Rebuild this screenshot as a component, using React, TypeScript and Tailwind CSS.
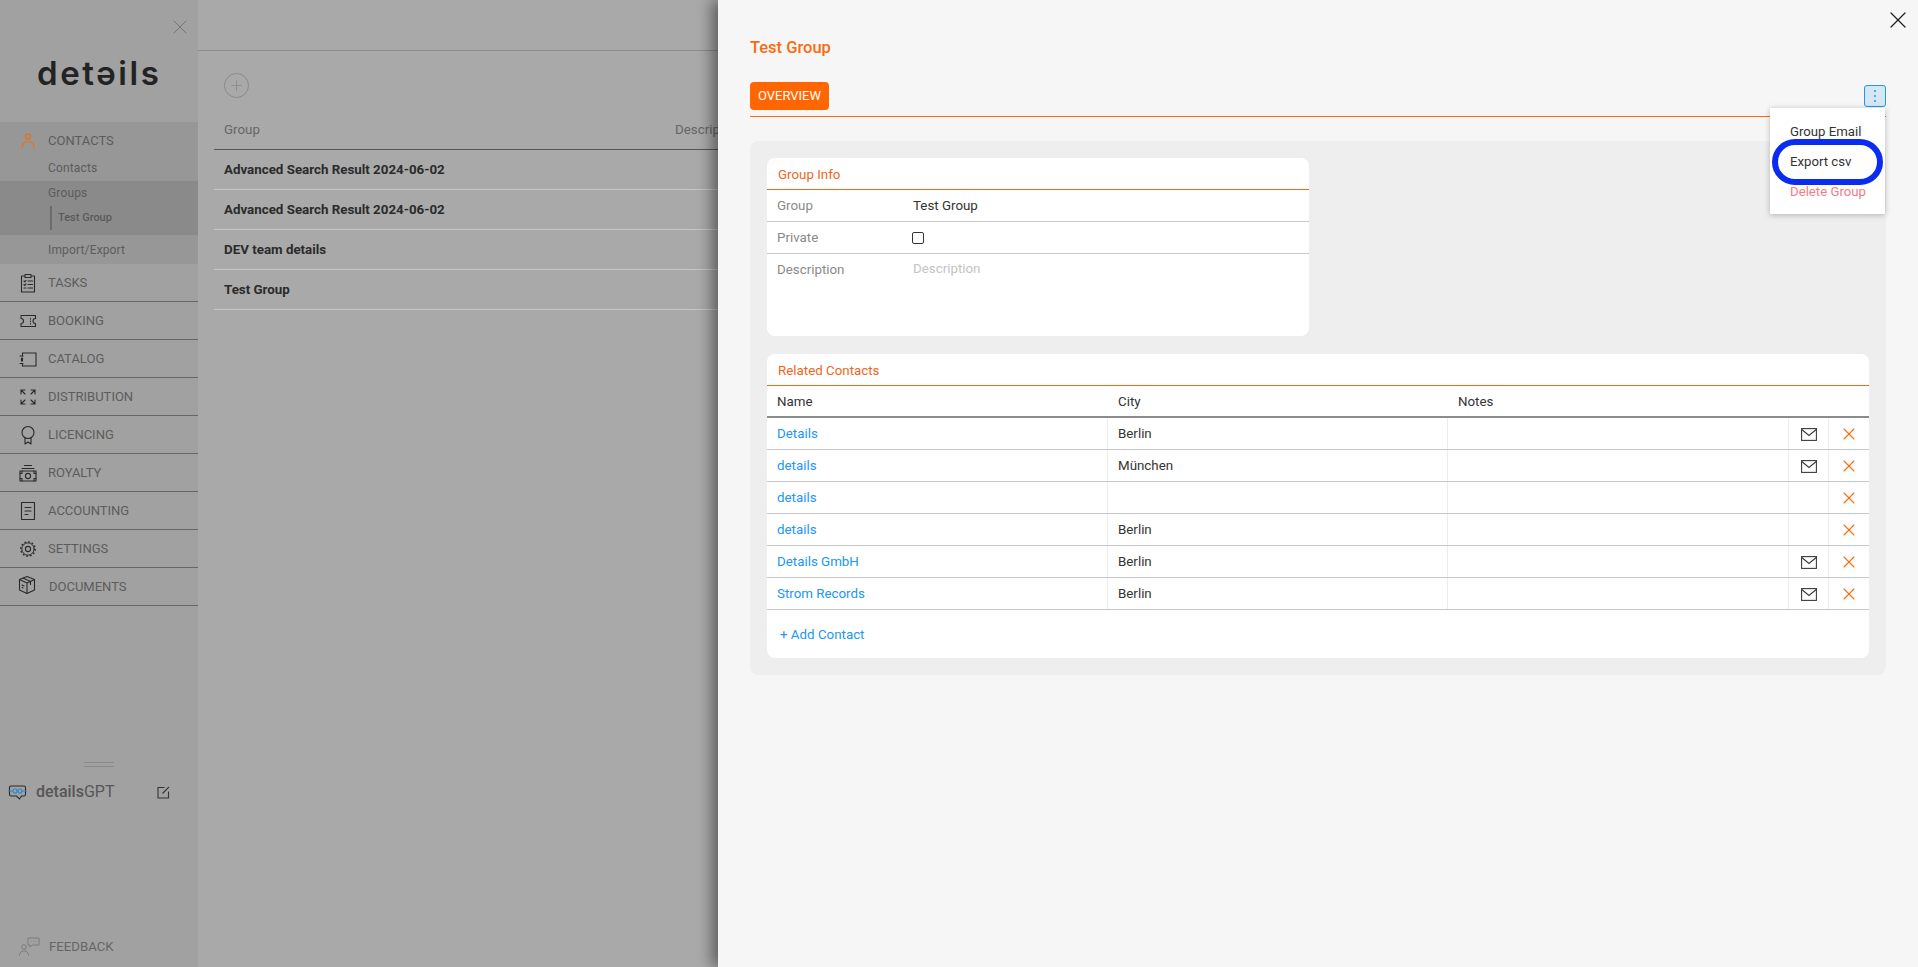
import { X, Plus } from 'lucide-react';
import type { ReactNode } from 'react';

const stroke = {
  fill: 'none',
  stroke: 'currentColor',
  strokeWidth: 1.1,
  strokeLinecap: 'round',
  strokeLinejoin: 'round',
} as const;

function Icon({ children, box = 20, className = '' }: { children: ReactNode; box?: number; className?: string }) {
  return (
    <svg width={box} height={box} viewBox="0 0 20 20" {...stroke} className={className}>
      {children}
    </svg>
  );
}

const TasksIcon = () => (
  <Icon>
    <path d="M6.5 3H3.5v16h13V3h-3" />
    <path d="M7 4.5V1.5h6v3z" />
    <path d="M6 8l.8.8L8 7.4M6 11.5l.8.8L8 10.9M6 15h2M10 8h4.5M10 11.5h4.5M10 15h4.5" />
  </Icon>
);
const BookingIcon = () => (
  <Icon>
    <path d="M3 4.5h14.5v3a2.5 2.5 0 0 0 0 5v3H3v-3a2.5 2.5 0 0 0 0-5z" />
    <path d="M12.5 7.5v.6M12.5 10v.6M12.5 12.5v.6" />
  </Icon>
);
const CatalogIcon = () => (
  <Icon>
    <path d="M4.5 4h13.5v13H4.5v-2.5M4.5 7V4M4.5 12V9" />
    <path d="M2 7h3M2 14.5h3M3.5 9v3" />
  </Icon>
);
const DistributionIcon = () => (
  <Icon>
    <path d="M3 7V3h4M3 3l4 4M17 7V3h-4M17 3l-4 4M3 13v4h4M3 17l4-4M17 13v4h-4M17 17l-4-4" />
  </Icon>
);
const LicenceIcon = () => (
  <Icon>
    <circle cx="10" cy="7.5" r="6" />
    <path d="M7 13v6l3-2 3 2v-6" />
  </Icon>
);
const RoyaltyIcon = () => (
  <Icon>
    <path d="M6.5 2.5h7M4 5.5h12" />
    <rect x="2" y="8" width="16" height="10" />
    <circle cx="10" cy="13" r="2.6" />
    <path d="M2 10.5h2V8M18 10.5h-2V8M2 15.5h2V18M18 15.5h-2V18" />
  </Icon>
);
const AccountingIcon = () => (
  <Icon>
    <path d="M3.5 1.5h13v17h-13z" />
    <path d="M7 6.5h6M7 10h6M7 13.5h3" />
  </Icon>
);
const SettingsIcon = () => (
  <Icon>
    <circle cx="10" cy="10" r="2.6" />
    <circle cx="10" cy="10" r="6.2" strokeWidth="1" />
    <circle cx="10" cy="10" r="7.2" strokeDasharray="1.8 1.95" strokeLinecap="butt" strokeWidth="1.3" />
  </Icon>
);
const DocumentsIcon = () => (
  <Icon>
    <path d="M10 1.5l7.5 3v10.5L10 18.5 2.5 15V4.5z" />
    <path d="M2.5 4.5L10 8l7.5-3.5M10 8v10.5M6 3l7.5 3.5v3M5 10l2 1M5 12.5l1 .5" />
  </Icon>
);

const navItems = [
  { label: 'TASKS', icon: <TasksIcon /> },
  { label: 'BOOKING', icon: <BookingIcon /> },
  { label: 'CATALOG', icon: <CatalogIcon /> },
  { label: 'DISTRIBUTION', icon: <DistributionIcon /> },
  { label: 'LICENCING', icon: <LicenceIcon /> },
  { label: 'ROYALTY', icon: <RoyaltyIcon /> },
  { label: 'ACCOUNTING', icon: <AccountingIcon /> },
  { label: 'SETTINGS', icon: <SettingsIcon /> },
];

const groups = ['Advanced Search Result 2024-06-02', 'Advanced Search Result 2024-06-02', 'DEV team details', 'Test Group'];

const contacts = [
  { name: 'Details', city: 'Berlin', mail: true },
  { name: 'details', city: 'München', mail: true },
  { name: 'details', city: '', mail: false },
  { name: 'details', city: 'Berlin', mail: false },
  { name: 'Details GmbH', city: 'Berlin', mail: true },
  { name: 'Strom Records', city: 'Berlin', mail: true },
];

function Sidebar() {
  return (
    <aside className="flex w-[198px] shrink-0 flex-col bg-[#a1a1a1] text-[#5c5c5c]">
      <div className="flex h-[122px] flex-col">
        <div className="flex justify-end pt-[15px] pr-[6px]">
          <X size={24} strokeWidth={1} className="text-[#767676]" />
        </div>
        <div className="mt-[13px] pl-[37px] font-['Inter',sans-serif] text-[33px] leading-[42px] font-semibold tracking-[2.6px] text-[#232323]">
          detəils
        </div>
      </div>

      <div className="h-[142px] bg-[#979797] text-[12px]">
        <div className="flex h-[38px] items-center pl-[21px]">
          <svg width="14" height="16" viewBox="0 0 14 16" fill="none" stroke="#ef6f12" strokeWidth="1.1">
            <circle cx="7" cy="3.5" r="2.6" />
            <path d="M1 15c0-4 2.5-6.5 6-6.5s6 2.5 6 6.5" />
          </svg>
          <span className="ml-[13px] text-[13px]">CONTACTS</span>
        </div>
        <div className="flex h-[21px] items-center pb-[6px] pl-[48px] tracking-[0.15px]">Contacts</div>
        <div className="flex h-[54px] flex-col bg-[#8a8a8a] pl-[48px] tracking-[0.15px]">
          <div className="flex h-[24px] items-center">Groups</div>
          <div className="mt-[1px] ml-[2px] flex h-[24px] items-center border-l-2 border-[#6d6d6d] pl-[6px] text-[11px] font-medium tracking-normal text-[#5a5a5a]">
            Test Group
          </div>
        </div>
        <div className="flex h-[29px] items-center pl-[48px] tracking-[0.15px]">Import/Export</div>
      </div>

      {navItems.map((item) => (
        <div key={item.label} className="flex h-[38px] items-center border-b border-[#666666] pl-[18px] text-[13px]">
          <span className="text-[#2a2a2a]">{item.icon}</span>
          <span className="ml-[10px]">{item.label}</span>
        </div>
      ))}
      <div className="flex h-[38px] items-center border-b border-[#666666] pl-[17px] text-[13px]">
        <span className="-mt-[4px] text-[#2a2a2a]">
          <DocumentsIcon />
        </span>
        <span className="ml-[12px]">DOCUMENTS</span>
      </div>

      <div className="mt-[156px] flex flex-col items-center">
        <div className="h-[5px] w-[30px] border-y border-[#8a8a8a]" />
      </div>
      <div className="mt-[15px] flex items-center pl-[8px]">
        <svg width="19" height="15" viewBox="0 0 19 15" fill="none" strokeWidth="1.1">
          <path d="M3 1h13a1.5 1.5 0 0 1 1.5 1.5v7A1.5 1.5 0 0 1 16 11h-2.5l-2 3-3-3H3a1.5 1.5 0 0 1-1.5-1.5v-7A1.5 1.5 0 0 1 3 1z" stroke="#2a2a2a" />
          <circle cx="7" cy="6" r="2" stroke="#2688e0" />
          <circle cx="12" cy="6" r="2" stroke="#2688e0" />
          <path d="M9 6h1M0 6h5M14 6h5" stroke="#2688e0" />
        </svg>
        <span className="ml-[9px] text-[16px] leading-[20px] font-medium text-[#565656]">
          details<span className="font-normal">GPT</span>
        </span>
        <svg width="13" height="13" viewBox="0 0 13 13" fill="none" stroke="#333333" strokeWidth="1.1" className="ml-[43px]">
          <path d="M7.5 1.5H1v10.5h10.5V5.5" />
          <path d="M5.5 7.5L12 .8" />
        </svg>
      </div>
      <div className="mt-[135px] flex items-center pl-[19px] text-[#666666]">
        <svg width="21" height="19" viewBox="0 0 21 19" fill="none" stroke="#7d7d7d" strokeWidth="1">
          <circle cx="5" cy="10" r="2.3" />
          <path d="M.5 18.5c0-3 2-4.6 4.5-4.6s4.5 1.6 4.5 4.6" />
          <path d="M9 1h11v7h-7l-2 2V8H9z" />
          <path d="M12 4.5h.6M14.3 4.5h.6M16.6 4.5h.6" />
        </svg>
        <span className="ml-[9px] text-[13.2px]">FEEDBACK</span>
      </div>
    </aside>
  );
}

function GroupList() {
  return (
    <main className="min-w-0 flex-1 overflow-hidden bg-[#a9a9a9]">
      <div className="h-[51px] border-b border-[#8c8c8c]" />
      <div className="pl-[16px]">
        <div className="flex h-[69px] items-center pb-[1px] pl-[10px]">
          <span className="flex h-[25px] w-[25px] items-center justify-center rounded-full border border-[#8a8a8a] text-[#858585]">
            <Plus size={17} strokeWidth={1} />
          </span>
        </div>
        <div className="flex h-[30px] items-start border-b border-[#575757] pl-[10px] text-[13.33px] whitespace-nowrap text-[#666666]">
          <span className="w-[451px] shrink-0">Group</span>
          <span>Description</span>
        </div>
        {groups.map((g, i) => (
          <div key={i} className="flex h-[40px] items-center border-b border-[#c6c6c6] pl-[10px] text-[13.33px] font-bold text-[#2b2b2b]">
            {g}
          </div>
        ))}
      </div>
    </main>
  );
}

function CardTitle({ children }: { children: ReactNode }) {
  return (
    <div className="flex h-[32px] items-center border-b border-[#f0661a] pt-[2px] pl-[11px] text-[13.33px] text-[#f0661a]">
      {children}
    </div>
  );
}

function MailIcon() {
  return (
    <svg width="16" height="13" viewBox="0 0 16 13" fill="none" stroke="#3a3a3a" strokeWidth="1.1" className="mt-[1px]">
      <rect x=".6" y=".6" width="14.8" height="11.8" />
      <path d="M.8 1.5L8 7.5l7.2-6" />
    </svg>
  );
}

function InfoRow({ label, children, last }: { label: string; children?: ReactNode; last?: boolean }) {
  return (
    <div className={`flex pl-[10px] text-[13.33px] ${last ? 'h-[83px] pt-[6px]' : 'h-[32px] items-center border-b border-[#c8c8c8]'}`}>
      <span className="w-[136px] text-[#8a8a8a]">{label}</span>
      {children}
    </div>
  );
}

function Drawer() {
  return (
    <section className="relative z-10 flex w-[1200px] shrink-0 flex-col bg-[#f6f6f6] pr-[32px] pl-[32px] shadow-[-6px_0_14px_rgba(0,0,0,0.45)]">
      <X size={28} strokeWidth={1.1} className="absolute top-[6px] right-[6px] text-[#222222]" />
      <h1 className="mt-[38px] text-[16.5px] leading-[20px] font-medium text-[#f96b10]">Test Group</h1>

      <div className="relative mt-[24px] flex h-[35px] items-start border-b border-[#f96b10]">
        <button className="flex h-[28px] w-[79px] items-center justify-center rounded-[4px] bg-[#ff6600] text-[13px] text-white">
          OVERVIEW
        </button>
        <button className="mt-[3px] ml-auto flex h-[22px] w-[22px] flex-col items-center justify-center gap-[3px] rounded-[3px] border border-[#2196f3] bg-[#d5e7f7]">
          <span className="h-[2px] w-[2px] rounded-full bg-[#2196f3]" />
          <span className="h-[2px] w-[2px] rounded-full bg-[#2196f3]" />
          <span className="h-[2px] w-[2px] rounded-full bg-[#2196f3]" />
        </button>

        <div className="absolute top-[26px] right-[1px] z-20 flex h-[106px] w-[115px] flex-col bg-white pt-[9px] pl-[20px] text-[13.2px] text-[#333333] shadow-[0_1px_6px_rgba(0,0,0,0.25)]">
          <div className="flex h-[30px] items-center">Group Email</div>
          <div className="flex h-[30px] items-center">Export csv</div>
          <div className="flex h-[30px] items-center text-[#f47c85]">Delete Group</div>
          <div className="absolute top-[31px] left-[2px] h-[46px] w-[111px] rounded-full border-[6px] border-[#0a2cf0]" />
        </div>
      </div>

      <div className="mt-[24px] flex h-[534px] flex-col rounded-[8px] bg-[#eeeeee] pt-[17px] pr-[17px] pl-[17px]">
        <div className="h-[178px] w-[542px] overflow-hidden rounded-[8px] bg-white">
          <CardTitle>Group Info</CardTitle>
          <InfoRow label="Group">
            <span className="text-[#333333]">Test Group</span>
          </InfoRow>
          <InfoRow label="Private">
            <span className="-ml-[1px] h-[12px] w-[12px] rounded-[2px] border border-[#333333]" />
          </InfoRow>
          <InfoRow label="Description" last>
            <span className="-mt-[1px] text-[#c4c4c4]">Description</span>
          </InfoRow>
        </div>

        <div className="mt-[18px] h-[304px] overflow-hidden rounded-[8px] bg-white text-[13.33px]">
          <CardTitle>Related Contacts</CardTitle>
          <div className="grid h-[32px] grid-cols-[340px_340px_1fr] items-center border-b-2 border-[#8c8c8c] pt-[1px] text-[#333333]">
            <span className="pl-[10px]">Name</span>
            <span className="pl-[11px]">City</span>
            <span className="pl-[11px]">Notes</span>
          </div>
          {contacts.map((c, i) => (
            <div key={i} className="grid h-[32px] grid-cols-[340px_340px_341px_40px_1fr] border-b border-[#c8c8c8]">
              <a className="flex items-center pl-[10px] text-[#2196f3]">{c.name}</a>
              <span className="flex items-center border-l border-[#ececec] pl-[10px] text-[#333333]">{c.city}</span>
              <span className="border-l border-[#ececec]" />
              <span className="flex items-center justify-center border-l border-[#ececec]">{c.mail && <MailIcon />}</span>
              <span className="flex items-center justify-center border-l border-[#ececec] text-[#f96b10]">
                <X size={20} strokeWidth={1.3} />
              </span>
            </div>
          ))}
          <div className="flex h-[48px] items-center pt-[1px] pl-[13px] text-[#2196f3]">+ Add Contact</div>
        </div>
      </div>
    </section>
  );
}

export default function App() {
  return (
    <div className="flex h-[967px] w-[1918px] overflow-hidden font-['Roboto',sans-serif]">
      <Sidebar />
      <GroupList />
      <Drawer />
    </div>
  );
}
